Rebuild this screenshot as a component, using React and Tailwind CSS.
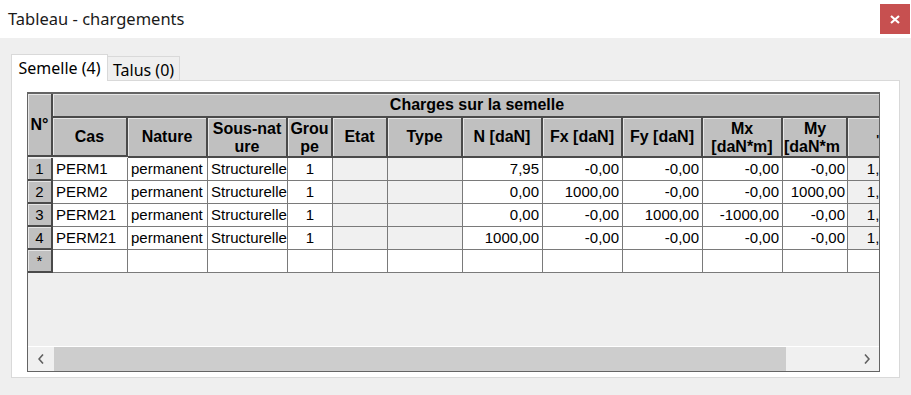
import React from "react";

const cols = "grid-cols-[25px_75px_80px_80px_45px_55px_75px_80px_80px_80px_80px_65px_55px]";

const rows = [
  ["1", "PERM1", "7,95", "-0,00", "-0,00", "-0,00", "-0,00"],
  ["2", "PERM2", "0,00", "1000,00", "-0,00", "-0,00", "1000,00"],
  ["3", "PERM21", "0,00", "-0,00", "1000,00", "-1000,00", "-0,00"],
  ["4", "PERM21", "1000,00", "-0,00", "-0,00", "-0,00", "-0,00"],
];

const hd =
  "bg-[#c0c0c0] border-r-2 border-b-2 border-[#4a4a4a] shadow-[inset_1px_1px_0_#e6e6e6] font-bold text-[16px] leading-[18px] text-black flex items-center justify-center text-center overflow-hidden whitespace-nowrap";
const cell =
  "h-[23px] border-r border-b border-[#7a7a7a] text-[15px] leading-[22px] text-black overflow-hidden whitespace-nowrap";
const rh =
  "h-[23px] bg-[#c0c0c0] border-2 border-[#4a4a4a] border-l-0 border-t-0 shadow-[inset_1px_1px_0_#e6e6e6] text-[15px] leading-[21px] text-black text-center";

export default function App() {
  return (
    <div
      className="w-[911px] h-[395px] bg-[#efefef] flex flex-col overflow-hidden"
      style={{ fontFamily: '"Liberation Sans", Arial, sans-serif' }}
    >
      {/* Title bar */}
      <div className="h-[38px] bg-white flex items-center justify-between shrink-0">
        <div
          className="pl-[8px] text-[16.5px] text-[#1a1a1a]"
          style={{ fontFamily: '"Noto Sans", "Open Sans", sans-serif' }}
        >
          Tableau - chargements
        </div>
        <div className="w-[30px] h-[30px] bg-[#c75050] mr-[1px] flex items-center justify-center">
          <svg width="10" height="9" viewBox="0 0 10 9">
            <path d="M1 1 L9 8 M9 1 L1 8" stroke="white" strokeWidth="2.2" />
          </svg>
        </div>
      </div>

      {/* Body */}
      <div className="flex-1 px-[11px] pt-[16px] flex flex-col">
        {/* Tabs */}
        <div
          className="flex items-end h-[26px] shrink-0"
          style={{ fontFamily: '"Noto Sans", "Open Sans", sans-serif' }}
        >
          <div className="relative z-10 h-[27px] -mb-px w-[97px] bg-white border border-b-0 border-[#d9d9d9] flex items-center justify-center pb-[1px] text-[16px] text-black">
            Semelle (4)
          </div>
          <div className="h-[24px] w-[72px] border border-l-0 border-b-0 border-[#d9d9d9] flex items-center justify-center pt-[3px] text-[16px] text-black">
            Talus (0)
          </div>
        </div>

        {/* Panel */}
        <div className="h-[298px] bg-white border border-[#d9d9d9] pt-[11px] pl-[15px] pr-[19px] pb-[5px] flex flex-col">
          <div className="flex-1 border border-t-2 border-[#646464] bg-[#efefef] flex flex-col overflow-hidden">
            <div className="flex-1 overflow-hidden">
              <div className={`grid ${cols} w-[875px]`}>
                {/* header row 1 */}
                <div className={`${hd} row-span-2 h-[63px]`}>N°</div>
                <div className={`${hd} col-span-12 h-[24px]`}>Charges sur la semelle</div>
                {/* header row 2 */}
                <div className={`${hd} h-[39px]`}>Cas</div>
                <div className={`${hd}`}>Nature</div>
                <div className={`${hd} flex-col pt-[2px]`}>
                  <span>Sous-nat</span>
                  <span>ure</span>
                </div>
                <div className={`${hd} flex-col pt-[2px]`}>
                  <span>Grou</span>
                  <span>pe</span>
                </div>
                <div className={`${hd}`}>Etat</div>
                <div className={`${hd}`}>Type</div>
                <div className={`${hd}`}>N [daN]</div>
                <div className={`${hd}`}>Fx [daN]</div>
                <div className={`${hd}`}>Fy [daN]</div>
                <div className={`${hd} flex-col pt-[2px]`}>
                  <span>Mx</span>
                  <span>[daN*m]</span>
                </div>
                <div className={`${hd} flex-col pt-[2px] items-start pl-[1px]`}>
                  <span className="w-full text-center">My</span>
                  <span>[daN*m</span>
                </div>
                <div className={`${hd} justify-end pr-[22px] pt-[6px]`}>
                  <span className="text-[12px]">'</span>
                </div>

                {/* data rows */}
                {rows.map((r) => (
                  <React.Fragment key={r[0]}>
                    <div className={rh}>{r[0]}</div>
                    <div className={`${cell} bg-white pl-[3px]`}>{r[1]}</div>
                    <div className={`${cell} bg-white pl-[3px]`}>permanent</div>
                    <div className={`${cell} bg-white pl-[3px]`}>Structurelle</div>
                    <div className={`${cell} bg-white text-center`}>1</div>
                    <div className={`${cell} bg-[#f0f0f0]`}></div>
                    <div className={`${cell} bg-[#f0f0f0]`}></div>
                    <div className={`${cell} bg-white text-right pr-[3px]`}>{r[2]}</div>
                    <div className={`${cell} bg-white text-right pr-[3px]`}>{r[3]}</div>
                    <div className={`${cell} bg-white text-right pr-[3px]`}>{r[4]}</div>
                    <div className={`${cell} bg-white text-right pr-[3px]`}>{r[5]}</div>
                    <div className={`${cell} bg-white text-right pr-[2px]`}>{r[6]}</div>
                    <div className={`${cell} bg-[#f0f0f0] text-right pr-[6px]`}>1,00</div>
                  </React.Fragment>
                ))}
                {/* new row */}
                <div className={`${rh} text-[13px]`}>*</div>
                {Array.from({ length: 12 }).map((_, i) => (
                  <div key={i} className={`${cell} bg-white`}></div>
                ))}
              </div>
            </div>

            {/* horizontal scrollbar */}
            <div className="h-[25px] shrink-0 border-t border-white bg-[#f0f0f0] flex items-stretch">
              <div className="w-[26px] flex items-center justify-center">
                <svg width="6" height="10" viewBox="0 0 6 10">
                  <path d="M5 0.5 L1 5 L5 9.5" fill="none" stroke="#606060" strokeWidth="1.6" />
                </svg>
              </div>
              <div className="w-[732px] bg-[#cdcdcd]"></div>
              <div className="flex-1 flex items-center justify-end pr-[9px]">
                <svg width="6" height="10" viewBox="0 0 6 10">
                  <path d="M1 0.5 L5 5 L1 9.5" fill="none" stroke="#606060" strokeWidth="1.6" />
                </svg>
              </div>
            </div>
          </div>
        </div>
      </div>
    </div>
  );
}
